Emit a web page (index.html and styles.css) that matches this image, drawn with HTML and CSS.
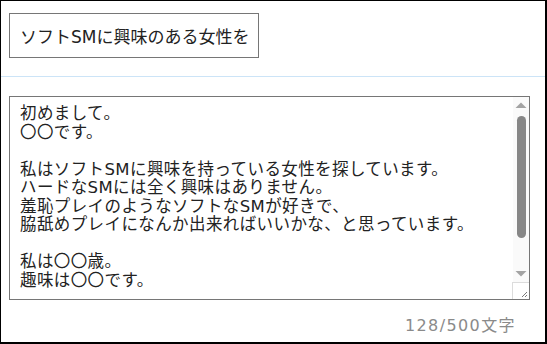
FILE: index.html
```html
<!DOCTYPE html>
<html lang="ja">
<head>
    <meta charset="UTF-8">
    <meta name="viewport" content="width=device-width, initial-scale=1.0">
    <title>メッセージ作成</title>
    <link rel="stylesheet" href="styles.css">
</head>
<body>
    <div class="frame">
        <div class="header">
            <button class="title-button">ソフトSMに興味のある女性を</button>
        </div>

        <div class="body-area">
            <div class="message-wrap">
                <textarea class="message" id="message">初めまして。
〇〇です。

私はソフトSMに興味を持っている女性を探しています。
ハードなSMには全く興味はありません。
羞恥プレイのようなソフトなSMが好きで、
脇舐めプレイになんか出来ればいいかな、と思っています。

私は〇〇歳。
趣味は〇〇です。

よろしくお願いします。</textarea>
                <!-- スクロールバー（見た目だけ） -->
                <div class="scrollbar">
                    <svg class="arrow" width="16" height="16" viewBox="0 0 16 16"><path d="M2.5 11 L8 5.5 L13.5 11 Z" fill="#a3a3a3"/></svg>
                    <div class="track"><div class="thumb"></div></div>
                    <svg class="arrow" width="16" height="16" viewBox="0 0 16 16"><path d="M2.5 5 L8 10.5 L13.5 5 Z" fill="#a3a3a3"/></svg>
                    <div class="corner">
                        <svg width="16" height="16" viewBox="0 0 16 16"><path d="M14 9 L9 14 M14 12 L12 14" stroke="#7a7a7a" stroke-width="1"/></svg>
                    </div>
                </div>
            </div>
            <div class="counter" id="counter">128/500文字</div>
        </div>
    </div>
</body>
</html>
```

FILE: styles.css
```css
/* 全体 */
body {
    margin: 0;
    padding: 0;
    background-color: #ffffff;
    font-family: "DejaVu Sans", "Noto Sans CJK JP", sans-serif;
    color: #222;
}
.frame {
    width: 547px;
    height: 344px;
    box-sizing: border-box;
    border-style: solid;
    border-color: #000;
    border-width: 1px 2px 2px 1px;
}

/* タイトル部分 */
.header {
    padding: 12px 8px 18px;
    border-bottom: 1px solid #cce4f7; /* 薄い青の区切り線 */
}
.title-button {
    height: 45px;
    padding: 0 9px 0 10px;
    border: 1px solid #767676;
    border-radius: 0;
    background-color: #fff;
    color: #222;
    font-family: inherit;
    font-size: 17px;
    cursor: pointer;
}

/* 本文 */
.body-area {
    padding: 19px 16px 0 8px;
}
.message-wrap {
    position: relative;
    width: 521px;
}
.message {
    display: block;
    width: 100%;
    height: 204px;
    box-sizing: border-box;
    padding: 8px 26px 8px 10px;
    border: 1px solid #767676;
    border-radius: 0;
    font-family: inherit;
    font-size: 16.5px;
    line-height: 18.5px;
    letter-spacing: 0.4px;
    color: #222;
    resize: none;
    overflow: hidden;
}
.scrollbar {
    position: absolute;
    top: 1px;
    right: 1px;
    bottom: 1px;
    width: 16px;
    background-color: #fafafa;
    display: flex;
    flex-direction: column;
}
.arrow {
    display: block;
    flex-shrink: 0;
}
.track {
    flex: 1;
    padding: 3px 0;
}
.thumb {
    width: 9px;
    height: 122px;
    margin: 0 auto;
    border-radius: 5px;
    background-color: #878787;
}
.corner {
    height: 16px;
    border-top: 1px solid #dcdcdc;
    border-left: 1px solid #dcdcdc;
    margin-left: -1px;
    background-color: #fff;
}
.corner svg {
    display: block;
}
.counter {
    text-align: right;
    margin-top: 16px;
    padding-right: 13px;
    font-size: 16px;
    line-height: 20px;
    letter-spacing: 1.4px;
    color: #8a8a8a;
}
```
